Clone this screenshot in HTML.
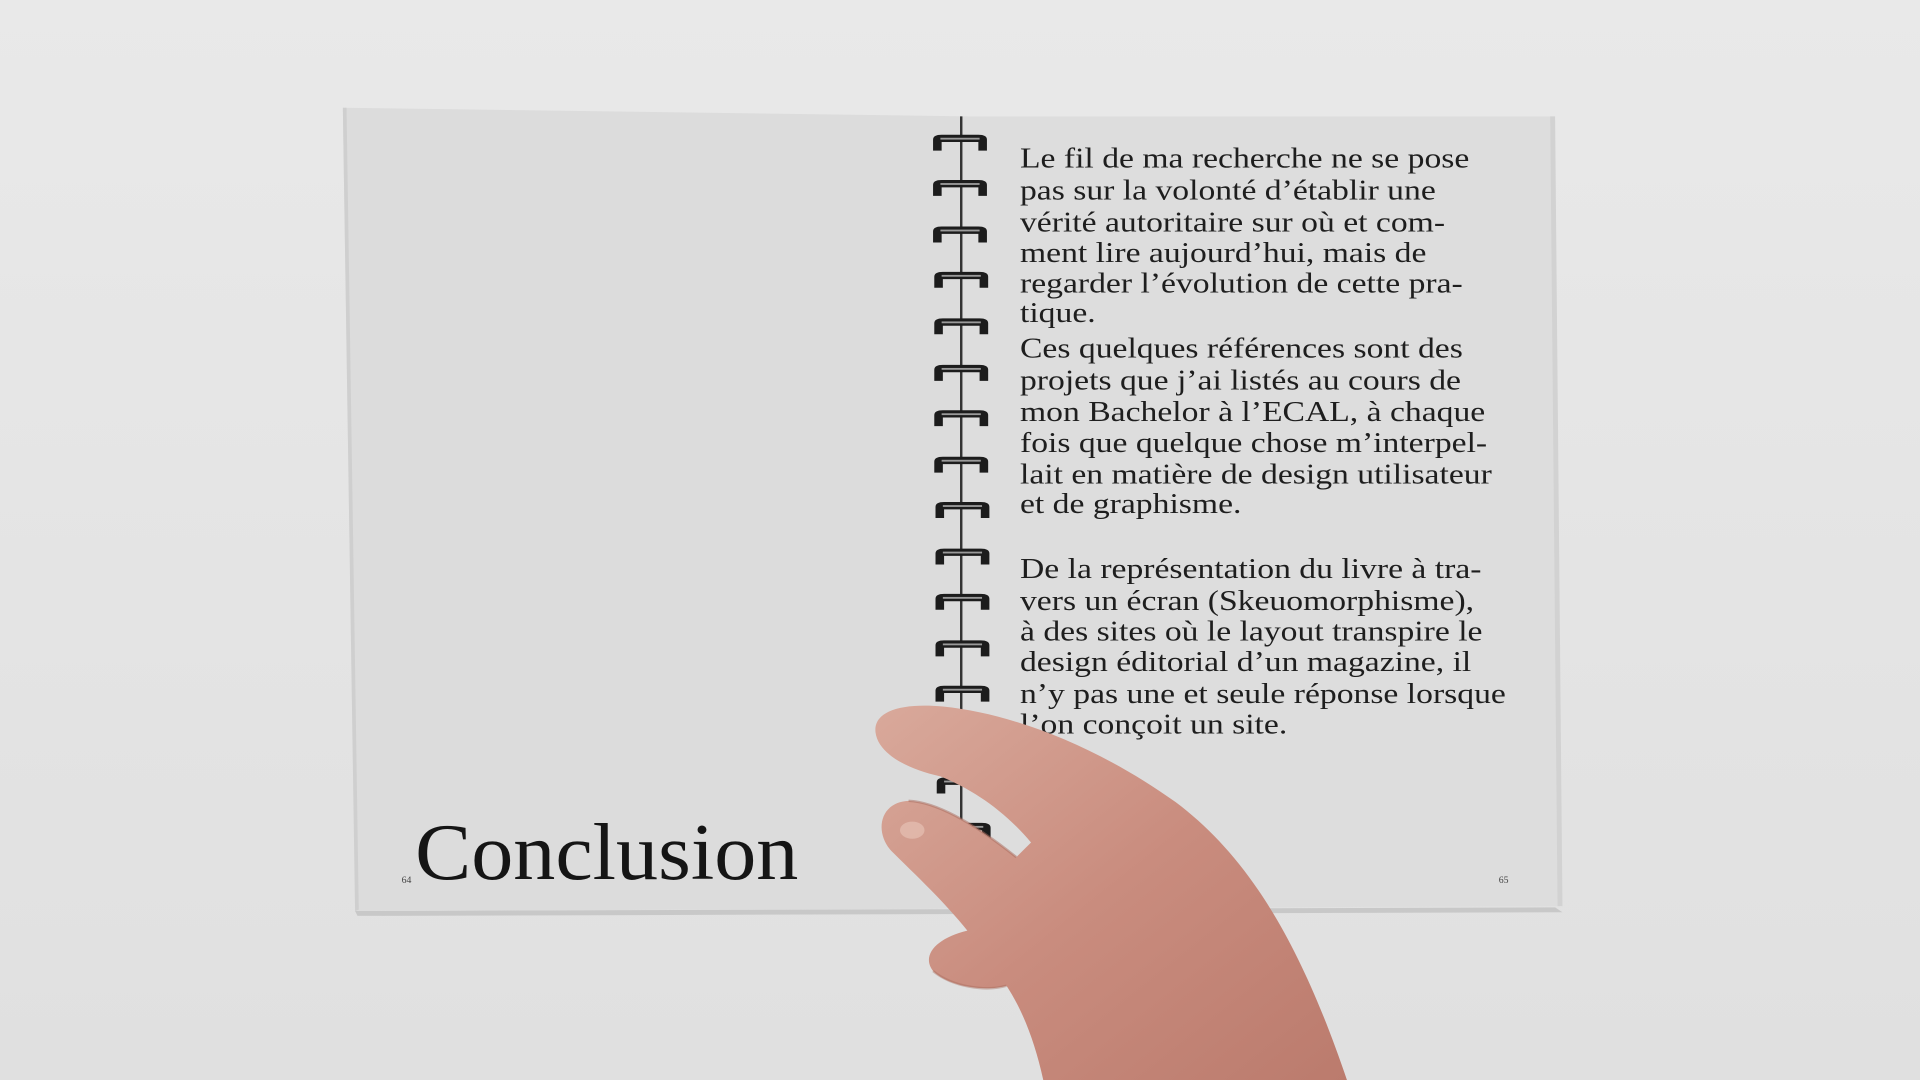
<!DOCTYPE html>
<html><head><meta charset="utf-8"><style>
html,body{margin:0;padding:0;width:1920px;height:1080px;overflow:hidden;background:#e7e7e7}
svg{display:block}
</style></head><body>
<svg width="1920" height="1080" viewBox="0 0 1568 882" preserveAspectRatio="none" xmlns="http://www.w3.org/2000/svg">
<defs>
<linearGradient id="bg" x1="0" y1="0" x2="0" y2="1"><stop offset="0" stop-color="#e9e9e9"/><stop offset="1" stop-color="#e0e0e0"/></linearGradient>
<linearGradient id="skin" x1="0" y1="0" x2="1" y2="1"><stop offset="0" stop-color="#d9a99b"/><stop offset="0.5" stop-color="#c98c7e"/><stop offset="1" stop-color="#bb7b6d"/></linearGradient>
<g id="coil"><path d="M0,13 L0,4 Q0,0 7,0 L37,0 Q44,0 44,4 L44,13 L37,13 L37,6 L7,6 L7,13 Z" fill="#1c1c1c"/><rect x="6" y="2.5" width="32" height="1.5" fill="#9a9a9a"/></g>
</defs>
<rect width="1568" height="882" fill="url(#bg)"/>
<path d="M290,744 L1270,741 L1276,745 L292,748 Z" fill="#c8c8c8"/>
<path d="M280,88 L790,95 L790,742 L290,744 Z" fill="#dcdcdc"/>
<path d="M280,88 L283,88 L293,743 L290,744 Z" fill="#cfcfcf"/>
<path d="M786,95 L1268,95 L1274,740 L786,742 Z" fill="#dddddd"/>
<path d="M1266,95 L1270,95 L1276,740 L1272,740 Z" fill="#d2d2d2"/>
<line x1="785" y1="95" x2="785" y2="690" stroke="#333" stroke-width="2"/>
<g transform="translate(762,110)"><use href="#coil"/></g>
<g transform="translate(762,147)"><use href="#coil"/></g>
<g transform="translate(762,185)"><use href="#coil"/></g>
<g transform="translate(763,222)"><use href="#coil"/></g>
<g transform="translate(763,260)"><use href="#coil"/></g>
<g transform="translate(763,298)"><use href="#coil"/></g>
<g transform="translate(763,335)"><use href="#coil"/></g>
<g transform="translate(763,373)"><use href="#coil"/></g>
<g transform="translate(764,410)"><use href="#coil"/></g>
<g transform="translate(764,448)"><use href="#coil"/></g>
<g transform="translate(764,485)"><use href="#coil"/></g>
<g transform="translate(764,523)"><use href="#coil"/></g>
<g transform="translate(764,560)"><use href="#coil"/></g>
<g transform="translate(765,635)"><use href="#coil"/></g>
<g transform="translate(765,672)"><use href="#coil"/></g>
<g font-family="'Liberation Serif', serif" font-size="23.5" fill="#1e1e1e" transform="translate(833,0) scale(1.17,1) translate(-833,0)">
<text x="833" y="137">Le fil de ma recherche ne se pose</text>
<text x="833" y="163">pas sur la volonté d’établir une</text>
<text x="833" y="189">vérité autoritaire sur où et com-</text>
<text x="833" y="214">ment lire aujourd’hui, mais de</text>
<text x="833" y="239">regarder l’évolution de cette pra-</text>
<text x="833" y="263">tique.</text>
<text x="833" y="292">Ces quelques références sont des</text>
<text x="833" y="318">projets que j’ai listés au cours de</text>
<text x="833" y="344">mon Bachelor à l’ECAL, à chaque</text>
<text x="833" y="369">fois que quelque chose m’interpel-</text>
<text x="833" y="395">lait en matière de design utilisateur</text>
<text x="833" y="419">et de graphisme.</text>
<text x="833" y="472">De la représentation du livre à tra-</text>
<text x="833" y="498">vers un écran (Skeuomorphisme),</text>
<text x="833" y="523">à des sites où le layout transpire le</text>
<text x="833" y="548">design éditorial d’un magazine, il</text>
<text x="833" y="574">n’y pas une et seule réponse lorsque</text>
<text x="833" y="599">l’on conçoit un site.</text>
</g>
<text x="339" y="718" font-family="'Liberation Serif', serif" font-size="66" fill="#151515" textLength="313" lengthAdjust="spacingAndGlyphs">Conclusion</text>
<text x="328" y="721" font-family="'Liberation Serif', serif" font-size="8" fill="#444">64</text>
<text x="1224" y="721" font-family="'Liberation Serif', serif" font-size="8" fill="#444">65</text>
<path d="M715,598 C713,580 738,574 770,577 C830,583 900,612 960,655 C1020,700 1062,770 1100,882 L852,882 C845,850 835,825 822,805 C805,810 775,806 762,793 C752,780 765,766 790,760 C770,735 745,712 728,695 C714,680 718,655 742,654 C765,655 795,672 830,700 L842,688 C820,662 795,645 768,634 C740,628 717,615 715,598 Z" fill="url(#skin)"/>
<path d="M742,654 C765,655 795,672 830,700" stroke="#a86a5c" stroke-width="2" fill="none" opacity="0.5"/>
<ellipse cx="745" cy="678" rx="10" ry="7" fill="#e6c0b3" opacity="0.7"/>
<path d="M762,793 C778,806 805,810 822,805" stroke="#a5685b" stroke-width="2" fill="none" opacity="0.4"/>
</svg>
</body></html>
